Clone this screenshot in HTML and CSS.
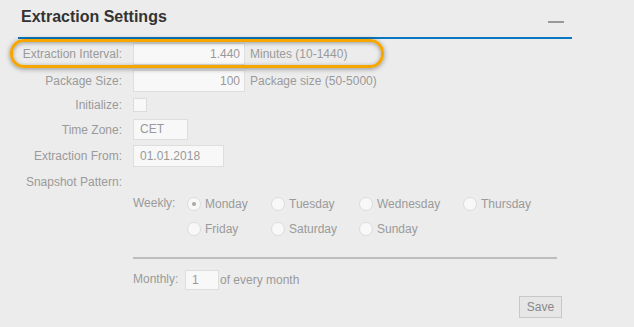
FILE: index.html
```html
<!DOCTYPE html>
<html>
<head>
<meta charset="utf-8">
<link rel="stylesheet" href="styles.css">
</head>
<body>
<div class="panel">
  <div class="header">
    <h1 class="title">Extraction Settings</h1>
    <span class="collapse"></span>
  </div>
  <div class="form">
    <div class="row r1">
      <label class="lbl">Extraction Interval:</label>
      <div class="field"><span class="input num w112">1.440</span><span class="hint">Minutes (10-1440)</span></div>
    </div>
    <div class="row r2">
      <label class="lbl">Package Size:</label>
      <div class="field"><span class="input num w112">100</span><span class="hint">Package size (50-5000)</span></div>
    </div>
    <div class="row r3">
      <label class="lbl">Initialize:</label>
      <div class="field"><span class="check"></span></div>
    </div>
    <div class="row r4">
      <label class="lbl">Time Zone:</label>
      <div class="field"><span class="input w55">CET</span></div>
    </div>
    <div class="row r5">
      <label class="lbl">Extraction From:</label>
      <div class="field"><span class="input w91">01.01.2018</span></div>
    </div>
    <div class="row r6">
      <label class="lbl">Snapshot Pattern:</label>
    </div>
    <div class="snapshot">
      <div class="weekly">
        <span class="sublbl">Weekly:</span>
        <div class="days">
          <span class="day"><span class="radio on"></span>Monday</span>
          <span class="day"><span class="radio"></span>Tuesday</span>
          <span class="day"><span class="radio"></span>Wednesday</span>
          <span class="day"><span class="radio"></span>Thursday</span>
          <span class="day"><span class="radio"></span>Friday</span>
          <span class="day"><span class="radio"></span>Saturday</span>
          <span class="day"><span class="radio"></span>Sunday</span>
        </div>
      </div>
      <div class="sep"></div>
      <div class="monthly">
        <span class="sublbl">Monthly:</span>
        <span class="input w34">1</span>
        <span class="hint tight">of every month</span>
      </div>
      <div class="actions"><span class="btn">Save</span></div>
    </div>
  </div>
  <div class="highlight"></div>
</div>
</body>
</html>
```
FILE: styles.css
```css
html, body {
  margin: 0;
  padding: 0;
  background: #ececec;
}
body {
  font-family: "Liberation Sans", Arial, sans-serif;
  font-size: 12px;
  color: #9a9a9a;
  width: 634px;
  height: 327px;
  overflow: hidden;
}
.panel {
  position: relative;
  padding: 0 62px 0 0;
}
.header {
  margin-left: 18px;
  height: 37px;
  border-bottom: 2px solid #0a78c0;
  display: flex;
  align-items: flex-start;
  justify-content: space-between;
}
.title {
  margin: 0;
  padding: 7px 0 0 3px;
  font-size: 16px;
  line-height: 19px;
  font-weight: bold;
  color: #333;
}
.collapse {
  width: 16px;
  height: 2px;
  background: #999;
  margin: 21px 8px 0 0;
}
.form {
  padding-top: 3px;
}
.row {
  display: flex;
  align-items: center;
  height: 23px;
}
.r2 { margin-top: 4px; }
.r3 { margin-top: 3px; height: 20px; }
.r4 { margin-top: 3px; }
.r5 { margin-top: 3px; }
.r6 { margin-top: 3px; }
.lbl {
  width: 122px;
  text-align: right;
  flex: none;
}
.field {
  margin-left: 11px;
  display: flex;
  align-items: center;
}
.input {
  box-sizing: border-box;
  height: 22px;
  line-height: 20px;
  background: #f8f8f8;
  border: 1px solid #dedede;
  padding: 0 6px;
  color: #999;
  display: inline-block;
}
.num { text-align: right; padding-right: 4px; }
.w112 { width: 112px; }
.w55 { width: 55px; height: 21px; line-height: 19px; }
.w91 { width: 91px; }
.w34 { width: 34px; height: 20px; line-height: 19px; padding-left: 6px; }
.hint {
  margin-left: 5px;
}
.hint.tight { margin-left: 1px; }
.check {
  display: inline-block;
  box-sizing: border-box;
  width: 14px;
  height: 14px;
  background: #f8f8f8;
  border: 1px solid #dcdcdc;
}
.snapshot {
  margin-left: 133px;
  width: 429px;
  margin-top: 0;
}
.weekly {
  display: flex;
  align-items: flex-start;
}
.sublbl {
  display: inline-block;
  line-height: 21px;
}
.weekly .sublbl {
  width: 54px;
}
.days {
  display: grid;
  grid-template-columns: 84px 88px 104px auto;
  row-gap: 4px;
}
.day {
  display: flex;
  align-items: center;
  height: 21px;
  white-space: nowrap;
}
.radio {
  box-sizing: border-box;
  width: 14px;
  height: 14px;
  border-radius: 50%;
  background: #f8f8f8;
  border: 1px solid #dcdcdc;
  margin-right: 4px;
  position: relative;
  flex: none;
}
.radio.on::after {
  content: "";
  position: absolute;
  left: 4px;
  top: 4px;
  width: 4px;
  height: 4px;
  border-radius: 50%;
  background: #a8a8a8;
}
.sep {
  width: 424px;
  height: 2px;
  background: #bdbdbd;
  margin-top: 18px;
}
.monthly {
  display: flex;
  align-items: center;
  margin-top: 10px;
}
.monthly .sublbl {
  width: 52px;
}
.actions {
  display: flex;
  justify-content: flex-end;
  margin-top: 6px;
}
.btn {
  box-sizing: border-box;
  width: 43px;
  height: 22px;
  line-height: 20px;
  text-align: center;
  border: 1px solid #c8c8c8;
  background: #e6e6e6;
  color: #888;
}
.highlight {
  position: absolute;
  left: 10px;
  top: 39px;
  width: 374px;
  height: 29px;
  box-sizing: border-box;
  border: 3px solid #f7a600;
  border-radius: 14px;
  box-shadow: 0 1px 5px rgba(0,0,0,0.4), inset 0 1px 4px rgba(0,0,0,0.35);
}
```
